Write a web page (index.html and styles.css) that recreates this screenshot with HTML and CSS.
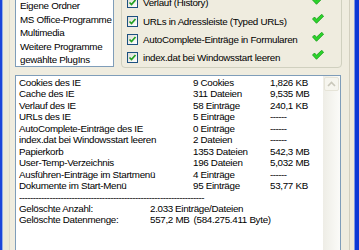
FILE: index.html
```html
<!DOCTYPE html>
<html lang="de">
<head>
    <meta charset="UTF-8">
    <title>Spuren löschen</title>
    <link rel="stylesheet" href="styles.css">
</head>
<body>
<div class="window">
    <div class="page">

        <div class="top">
            <ul class="folders">
                <li>Eigene Ordner</li>
                <li>MS Office-Programme</li>
                <li>Multimedia</li>
                <li>Weitere Programme</li>
                <li>gewählte PlugIns</li>
            </ul>

            <div class="options">
                <div class="option">
                    <span class="box"><svg width="9" height="9" viewBox="0 0 9 9"><path d="M1.5 4.5 L3.5 6.5 L7.5 2" fill="none" stroke="#21a121" stroke-width="1.7"/></svg></span>
                    <span class="label">Verlauf (History)</span>
                    <svg class="done" width="12" height="10" viewBox="0 0 12 10"><polygon points="0.5,5 2.5,3 4.5,5.2 9.7,0.3 11.6,2.2 4.5,9.3" fill="#2bd42b" stroke="#139a13" stroke-width="0.8"/></svg>
                </div>
                <div class="option">
                    <span class="box"><svg width="9" height="9" viewBox="0 0 9 9"><path d="M1.5 4.5 L3.5 6.5 L7.5 2" fill="none" stroke="#21a121" stroke-width="1.7"/></svg></span>
                    <span class="label">URLs in Adressleiste (Typed URLs)</span>
                    <svg class="done" width="12" height="10" viewBox="0 0 12 10"><polygon points="0.5,5 2.5,3 4.5,5.2 9.7,0.3 11.6,2.2 4.5,9.3" fill="#2bd42b" stroke="#139a13" stroke-width="0.8"/></svg>
                </div>
                <div class="option">
                    <span class="box"><svg width="9" height="9" viewBox="0 0 9 9"><path d="M1.5 4.5 L3.5 6.5 L7.5 2" fill="none" stroke="#21a121" stroke-width="1.7"/></svg></span>
                    <span class="label">AutoComplete-Einträge in Formularen</span>
                    <svg class="done" width="12" height="10" viewBox="0 0 12 10"><polygon points="0.5,5 2.5,3 4.5,5.2 9.7,0.3 11.6,2.2 4.5,9.3" fill="#2bd42b" stroke="#139a13" stroke-width="0.8"/></svg>
                </div>
                <div class="option">
                    <span class="box"><svg width="9" height="9" viewBox="0 0 9 9"><path d="M1.5 4.5 L3.5 6.5 L7.5 2" fill="none" stroke="#21a121" stroke-width="1.7"/></svg></span>
                    <span class="label">index.dat bei Windowsstart leeren</span>
                    <svg class="done" width="12" height="10" viewBox="0 0 12 10"><polygon points="0.5,5 2.5,3 4.5,5.2 9.7,0.3 11.6,2.2 4.5,9.3" fill="#2bd42b" stroke="#139a13" stroke-width="0.8"/></svg>
                </div>
            </div>
        </div>

        <div class="report">
            <div class="report-body">
                <div class="rows">
                    <span>Cookies des IE</span><span>9 Cookies</span><span>1,826 KB</span>
                    <span>Cache des IE</span><span>311 Dateien</span><span>9,535 MB</span>
                    <span>Verlauf des IE</span><span>58 Einträge</span><span>240,1 KB</span>
                    <span>URLs des IE</span><span>5 Einträge</span><span class="dash">------</span>
                    <span>AutoComplete-Einträge des IE</span><span>0 Einträge</span><span class="dash">------</span>
                    <span>index.dat bei Windowsstart leeren</span><span>2 Dateien</span><span class="dash">------</span>
                    <span>Papierkorb</span><span>1353 Dateien</span><span>542,3 MB</span>
                    <span>User-Temp-Verzeichnis</span><span>196 Dateien</span><span>5,032 MB</span>
                    <span>Ausführen-Einträge im Startmenü</span><span>4 Einträge</span><span class="dash">------</span>
                    <span>Dokumente im Start-Menü</span><span>95 Einträge</span><span>53,77 KB</span>
                </div>
                <div class="dash rule">-------------------------------------------------------------------</div>
                <div class="sum">
                    <span class="sum-label">Gelöschte Anzahl:</span>
                    <span class="sum-value">2.033</span>
                    <span class="sum-unit">Einträge/Dateien</span>
                </div>
                <div class="sum">
                    <span class="sum-label">Gelöschte Datenmenge:</span>
                    <span class="sum-value">557,2 MB</span>
                    <span class="sum-unit wide">(584.275.411 Byte)</span>
                </div>
            </div>
            <div class="scrollbar">
                <div class="arrow"><svg width="9" height="6" viewBox="0 0 9 6"><path d="M1 5 L4.5 1.5 L8 5" fill="none" stroke="#c9c7ba" stroke-width="1.6"/></svg></div>
                <div class="track"></div>
                <div class="arrow"><svg width="9" height="6" viewBox="0 0 9 6"><path d="M1 1 L4.5 4.5 L8 1" fill="none" stroke="#c9c7ba" stroke-width="1.6"/></svg></div>
            </div>
        </div>

    </div>
</div>
</body>
</html>
```
FILE: styles.css
```css
* {
    box-sizing: border-box;
}

body {
    margin: 0;
    width: 359px;
    height: 250px;
    overflow: hidden;
    font-family: 'Liberation Sans', Arial, sans-serif;
    font-size: 9.8px;
    letter-spacing: -0.3px;
    color: #000;
}

.window {
    display: flex;
    height: 250px;
    background-color: #ece9d8;
    border-left: 2px solid #1c45d8;
    border-right: 4px solid #0b38d4;
    box-shadow: inset 1px 0 #93aee8, inset -1px 0 #7d98e0;
}

.page {
    flex: 1;
    margin: 0 5px 0 7px;
    padding: 0 8px 0 5px;
    border-left: 1px solid #dedbcb;
    border-right: 1px solid #d2cfbf;
    background-color: #efecdf;
}

.top {
    display: flex;
    align-items: flex-end;
    height: 88px;
    margin-top: -20px;
}

ul {
    list-style: none;
    margin: 0;
}

.folders {
    width: 99px;
    height: 73px;
    margin-bottom: 1px;
    padding: 4px 0 0 4px;
    border: 1px solid #7f9db9;
    background-color: #fff;
    line-height: 13.5px;
    white-space: nowrap;
    overflow: hidden;
}

.options {
    display: flex;
    flex-direction: column;
    justify-content: flex-end;
    width: 221px;
    height: 88px;
    margin-left: 7px;
    margin-right: -1px;
    padding: 0 17px 0 4px;
    border: 1px solid #d0d0bf;
    border-radius: 4px;
}

.option {
    display: flex;
    align-items: center;
    height: 18.33px;
}

.box {
    display: flex;
    align-items: center;
    justify-content: center;
    width: 11px;
    height: 11px;
    margin-left: 1px;
    border: 1px solid #1c5180;
    background: linear-gradient(135deg, #dcdcd6, #fff);
}

.label {
    flex: 1;
    margin-left: 5px;
    white-space: nowrap;
}

.done {
    margin-top: -5px;
}

.report {
    display: flex;
    height: 200px;
    margin-top: 7px;
    border: 1px solid #7f9db9;
    background-color: #fff;
}

.report-body {
    flex: 1;
    padding: 1px 0 0 3px;
    line-height: 11.45px;
    white-space: nowrap;
}

.rows {
    display: grid;
    grid-template-columns: 174px 77px 1fr;
}

.dash {
    letter-spacing: -0.5px;
}

.rule {
    overflow: hidden;
    width: 190px;
}

.sum {
    display: flex;
}

.sum-label {
    width: 131px;
}

.sum-unit {
    margin-left: 2px;
}

.sum-unit.wide {
    margin-left: 4px;
}

.scrollbar {
    display: flex;
    flex-direction: column;
    width: 17px;
    background: linear-gradient(to right, #eeede6, #fbfbf8);
}

.arrow {
    display: flex;
    align-items: center;
    justify-content: center;
    height: 14px;
    margin: 1px;
    border: 1px solid #e6e4d8;
    border-radius: 2px;
    background-color: #f6f5ee;
}

.track {
    flex: 1;
}
```
